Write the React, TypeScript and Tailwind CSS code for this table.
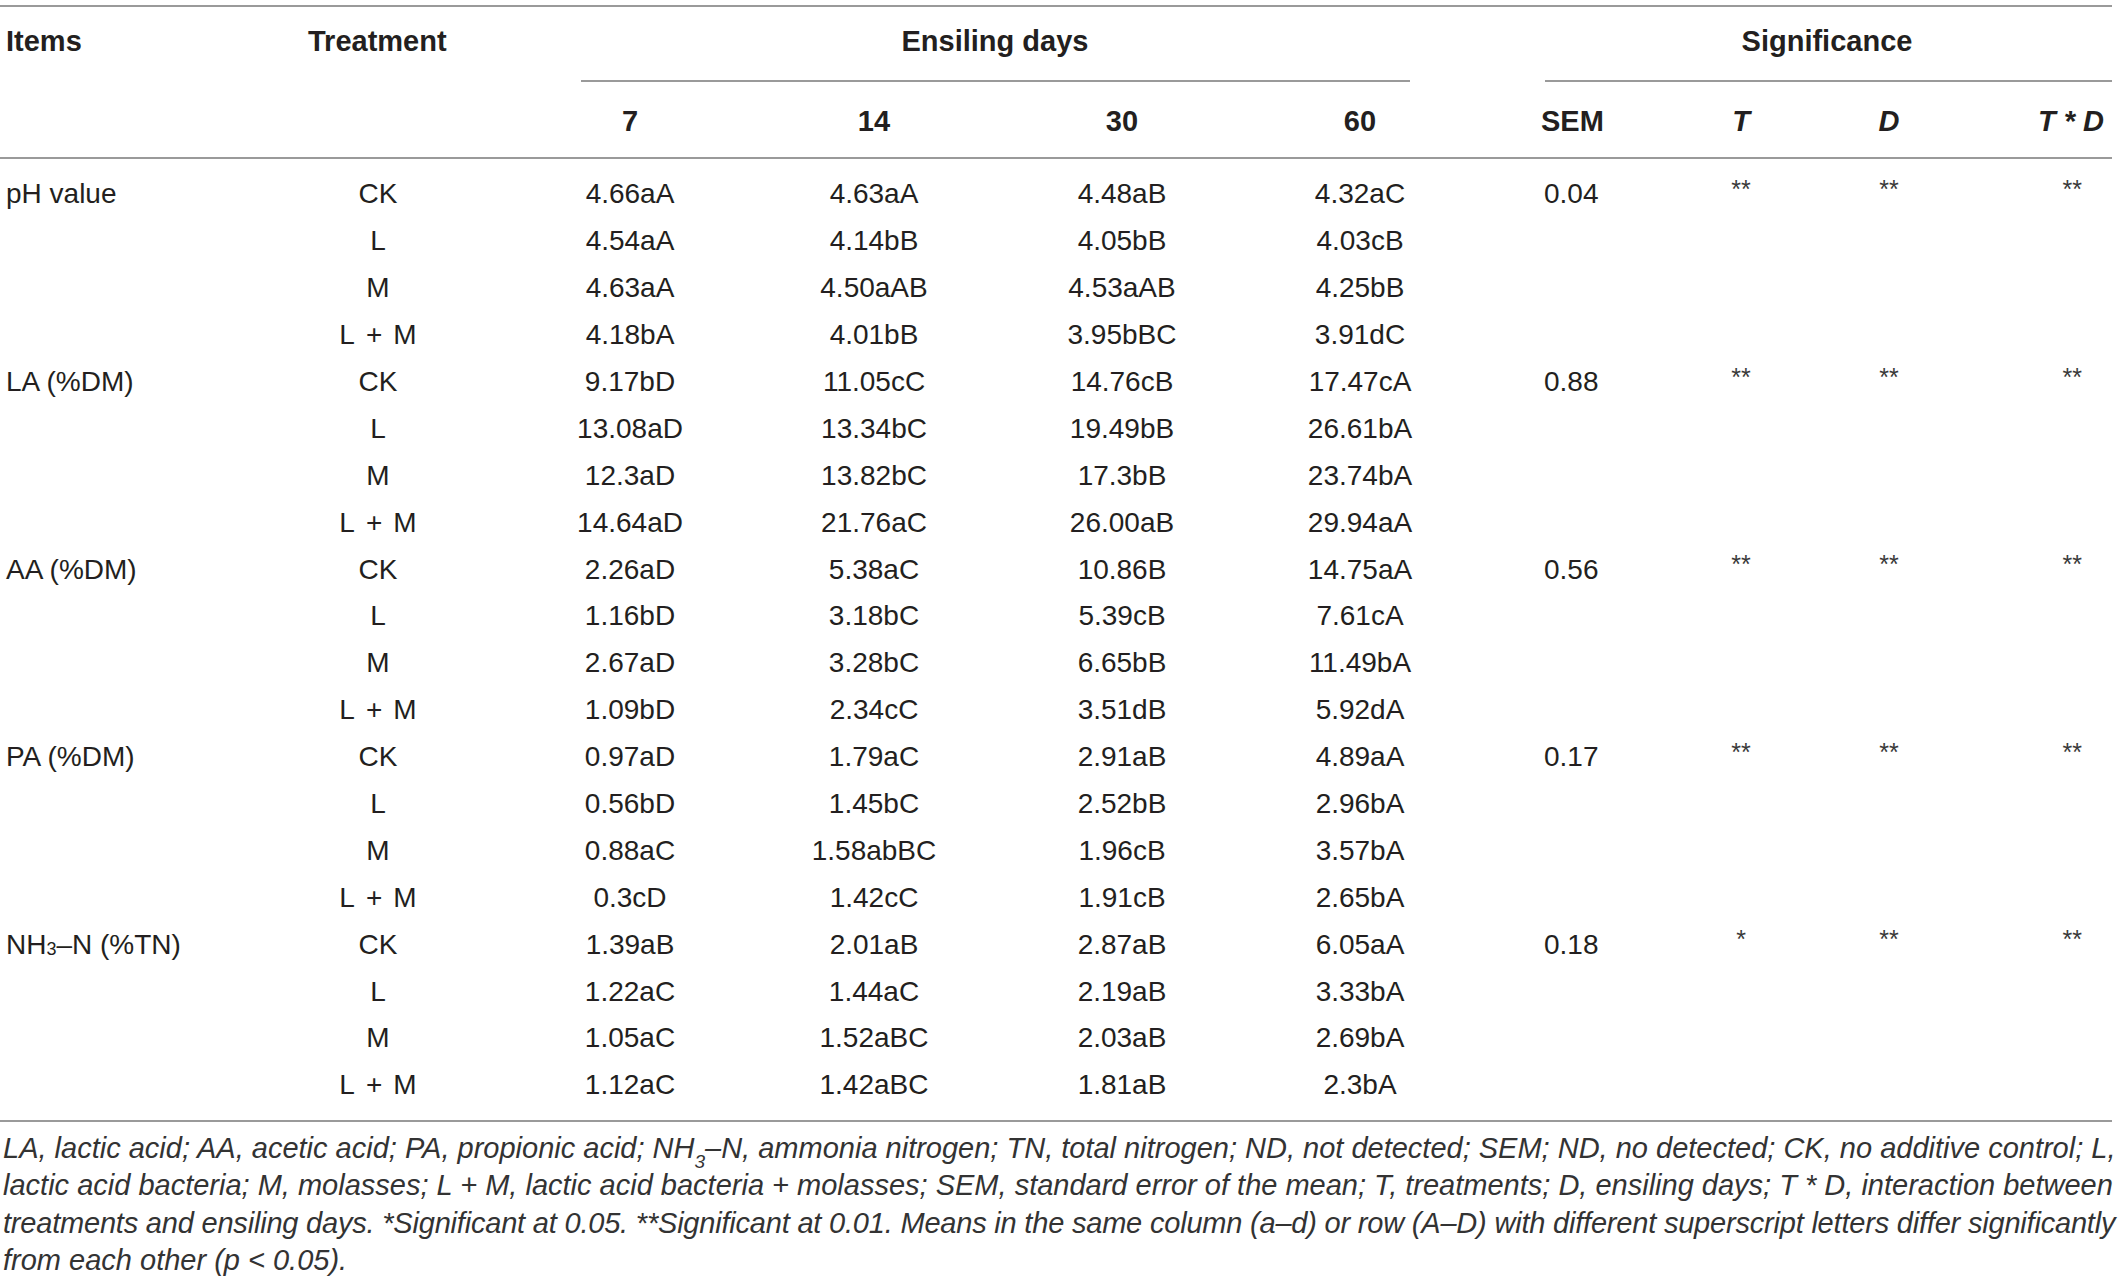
import React from "react";

type Row = { item?: React.ReactNode; trt: string; vals: string[]; sem?: string; sig?: [string, string, string] };

const rows: Row[] = [
  { item: "pH value", trt: "CK", vals: ["4.66aA", "4.63aA", "4.48aB", "4.32aC"], sem: "0.04", sig: ["**", "**", "**"] },
  { trt: "L", vals: ["4.54aA", "4.14bB", "4.05bB", "4.03cB"] },
  { trt: "M", vals: ["4.63aA", "4.50aAB", "4.53aAB", "4.25bB"] },
  { trt: "L + M", vals: ["4.18bA", "4.01bB", "3.95bBC", "3.91dC"] },
  { item: "LA (%DM)", trt: "CK", vals: ["9.17bD", "11.05cC", "14.76cB", "17.47cA"], sem: "0.88", sig: ["**", "**", "**"] },
  { trt: "L", vals: ["13.08aD", "13.34bC", "19.49bB", "26.61bA"] },
  { trt: "M", vals: ["12.3aD", "13.82bC", "17.3bB", "23.74bA"] },
  { trt: "L + M", vals: ["14.64aD", "21.76aC", "26.00aB", "29.94aA"] },
  { item: "AA (%DM)", trt: "CK", vals: ["2.26aD", "5.38aC", "10.86B", "14.75aA"], sem: "0.56", sig: ["**", "**", "**"] },
  { trt: "L", vals: ["1.16bD", "3.18bC", "5.39cB", "7.61cA"] },
  { trt: "M", vals: ["2.67aD", "3.28bC", "6.65bB", "11.49bA"] },
  { trt: "L + M", vals: ["1.09bD", "2.34cC", "3.51dB", "5.92dA"] },
  { item: "PA (%DM)", trt: "CK", vals: ["0.97aD", "1.79aC", "2.91aB", "4.89aA"], sem: "0.17", sig: ["**", "**", "**"] },
  { trt: "L", vals: ["0.56bD", "1.45bC", "2.52bB", "2.96bA"] },
  { trt: "M", vals: ["0.88aC", "1.58abBC", "1.96cB", "3.57bA"] },
  { trt: "L + M", vals: ["0.3cD", "1.42cC", "1.91cB", "2.65bA"] },
  {
    item: (
      <>
        NH<sub className="text-[18px] align-[-5px]">3</sub>–N (%TN)
      </>
    ),
    trt: "CK",
    vals: ["1.39aB", "2.01aB", "2.87aB", "6.05aA"],
    sem: "0.18",
    sig: ["*", "**", "**"],
  },
  { trt: "L", vals: ["1.22aC", "1.44aC", "2.19aB", "3.33bA"] },
  { trt: "M", vals: ["1.05aC", "1.52aBC", "2.03aB", "2.69bA"] },
  { trt: "L + M", vals: ["1.12aC", "1.42aBC", "1.81aB", "2.3bA"] },
];

const cols = "grid grid-cols-[300px_156px_348px_140px_356px_120px_220px_202px_94px_176px]";

function Stars({ s }: { s?: string }) {
  return <span className="self-start pt-[6px] text-[25px] leading-none text-[#3a3a3a]">{s}</span>;
}

function Trt({ t }: { t: string }) {
  if (t !== "L + M") return <>{t}</>;
  return (
    <>
      L<span className="px-[11px]">+</span>M
    </>
  );
}

export default function App() {
  return (
    <div className="min-h-screen w-[2119px] bg-white pt-[5px] text-[#231f20] font-['Liberation_Sans',Arial,sans-serif]">
      <div className="w-[2112px]">
        <div className="h-[2px] bg-[#9a9a9a]" />

        {/* header */}
        <div className={`${cols} text-[29px] font-bold`}>
          <div className="flex h-[75px] items-center pb-[6px] pl-[6px]">Items</div>
          <div className="flex h-[75px] items-center pb-[6px] pl-[8px]">Treatment</div>
          <div className="col-span-4 flex h-[75px] flex-col">
            <div className="flex flex-1 items-center justify-center pb-[4px] pl-[114px]">Ensiling days</div>
            <div className="ml-[125px] mr-[10px] h-[2px] bg-[#9a9a9a]" />
          </div>
          <div className="col-span-4 flex h-[75px] flex-col">
            <div className="flex flex-1 items-center justify-center pb-[4px] pl-[122px]">Significance</div>
            <div className="ml-[125px] h-[2px] bg-[#9a9a9a]" />
          </div>

          <div className="h-[75px]" />
          <div className="h-[75px]" />
          <div className="flex h-[75px] items-center justify-center pt-[4px]">7</div>
          <div className="flex h-[75px] items-center justify-center pt-[4px]">14</div>
          <div className="flex h-[75px] items-center justify-center pt-[4px]">30</div>
          <div className="flex h-[75px] items-center justify-center pt-[4px]">60</div>
          <div className="flex h-[75px] items-center pl-[121px] pt-[4px]">SEM</div>
          <div className="flex h-[75px] items-center justify-center pt-[4px] italic">T</div>
          <div className="flex h-[75px] items-center justify-center pt-[4px] italic">D</div>
          <div className="flex h-[75px] items-center justify-end pr-[8px] pt-[4px] italic">T * D</div>
        </div>
        <div className="h-[2px] bg-[#9a9a9a]" />

        {/* body */}
        <div className={`${cols} pb-[11px] pt-[12px] text-[28px] font-light`}>
          {rows.map((r, i) => (
            <React.Fragment key={i}>
              <div className="flex h-[46.9px] items-center whitespace-nowrap pl-[6px]">{r.item}</div>
              <div className="flex h-[46.9px] items-center justify-center">
                <Trt t={r.trt} />
              </div>
              {r.vals.map((v, j) => (
                <div key={j} className="flex h-[46.9px] items-center justify-center">
                  {v}
                </div>
              ))}
              <div className="flex h-[46.9px] items-center pl-[124px]">{r.sem}</div>
              <div className="flex h-[46.9px] justify-center">
                <Stars s={r.sig?.[0]} />
              </div>
              <div className="flex h-[46.9px] justify-center">
                <Stars s={r.sig?.[1]} />
              </div>
              <div className="flex h-[46.9px] justify-end pr-[30px]">
                <Stars s={r.sig?.[2]} />
              </div>
            </React.Fragment>
          ))}
        </div>
        <div className="h-[2px] bg-[#9a9a9a]" />

        {/* footnote */}
        <div className="whitespace-nowrap pl-[3px] pt-[8px] text-[29px] italic leading-[37.5px] text-[#333]">
          <div>
            LA, lactic acid; AA, acetic acid; PA, propionic acid; NH<sub className="text-[19px] align-[-5px]">3</sub>–N, ammonia nitrogen; TN, total nitrogen; ND, not detected; SEM; ND, no detected; CK, no additive control; L,
          </div>
          <div>
            lactic acid bacteria; M, molasses; L + M, lactic acid bacteria + molasses; SEM, standard error of the mean; T, treatments; D, ensiling days; T * D, interaction between
          </div>
          <div className="tracking-[-0.2px]">
            treatments and ensiling days. *Significant at 0.05. **Significant at 0.01. Means in the same column (a–d) or row (A–D) with different superscript letters differ significantly
          </div>
          <div>from each other (p &lt; 0.05).</div>
        </div>
      </div>
    </div>
  );
}
